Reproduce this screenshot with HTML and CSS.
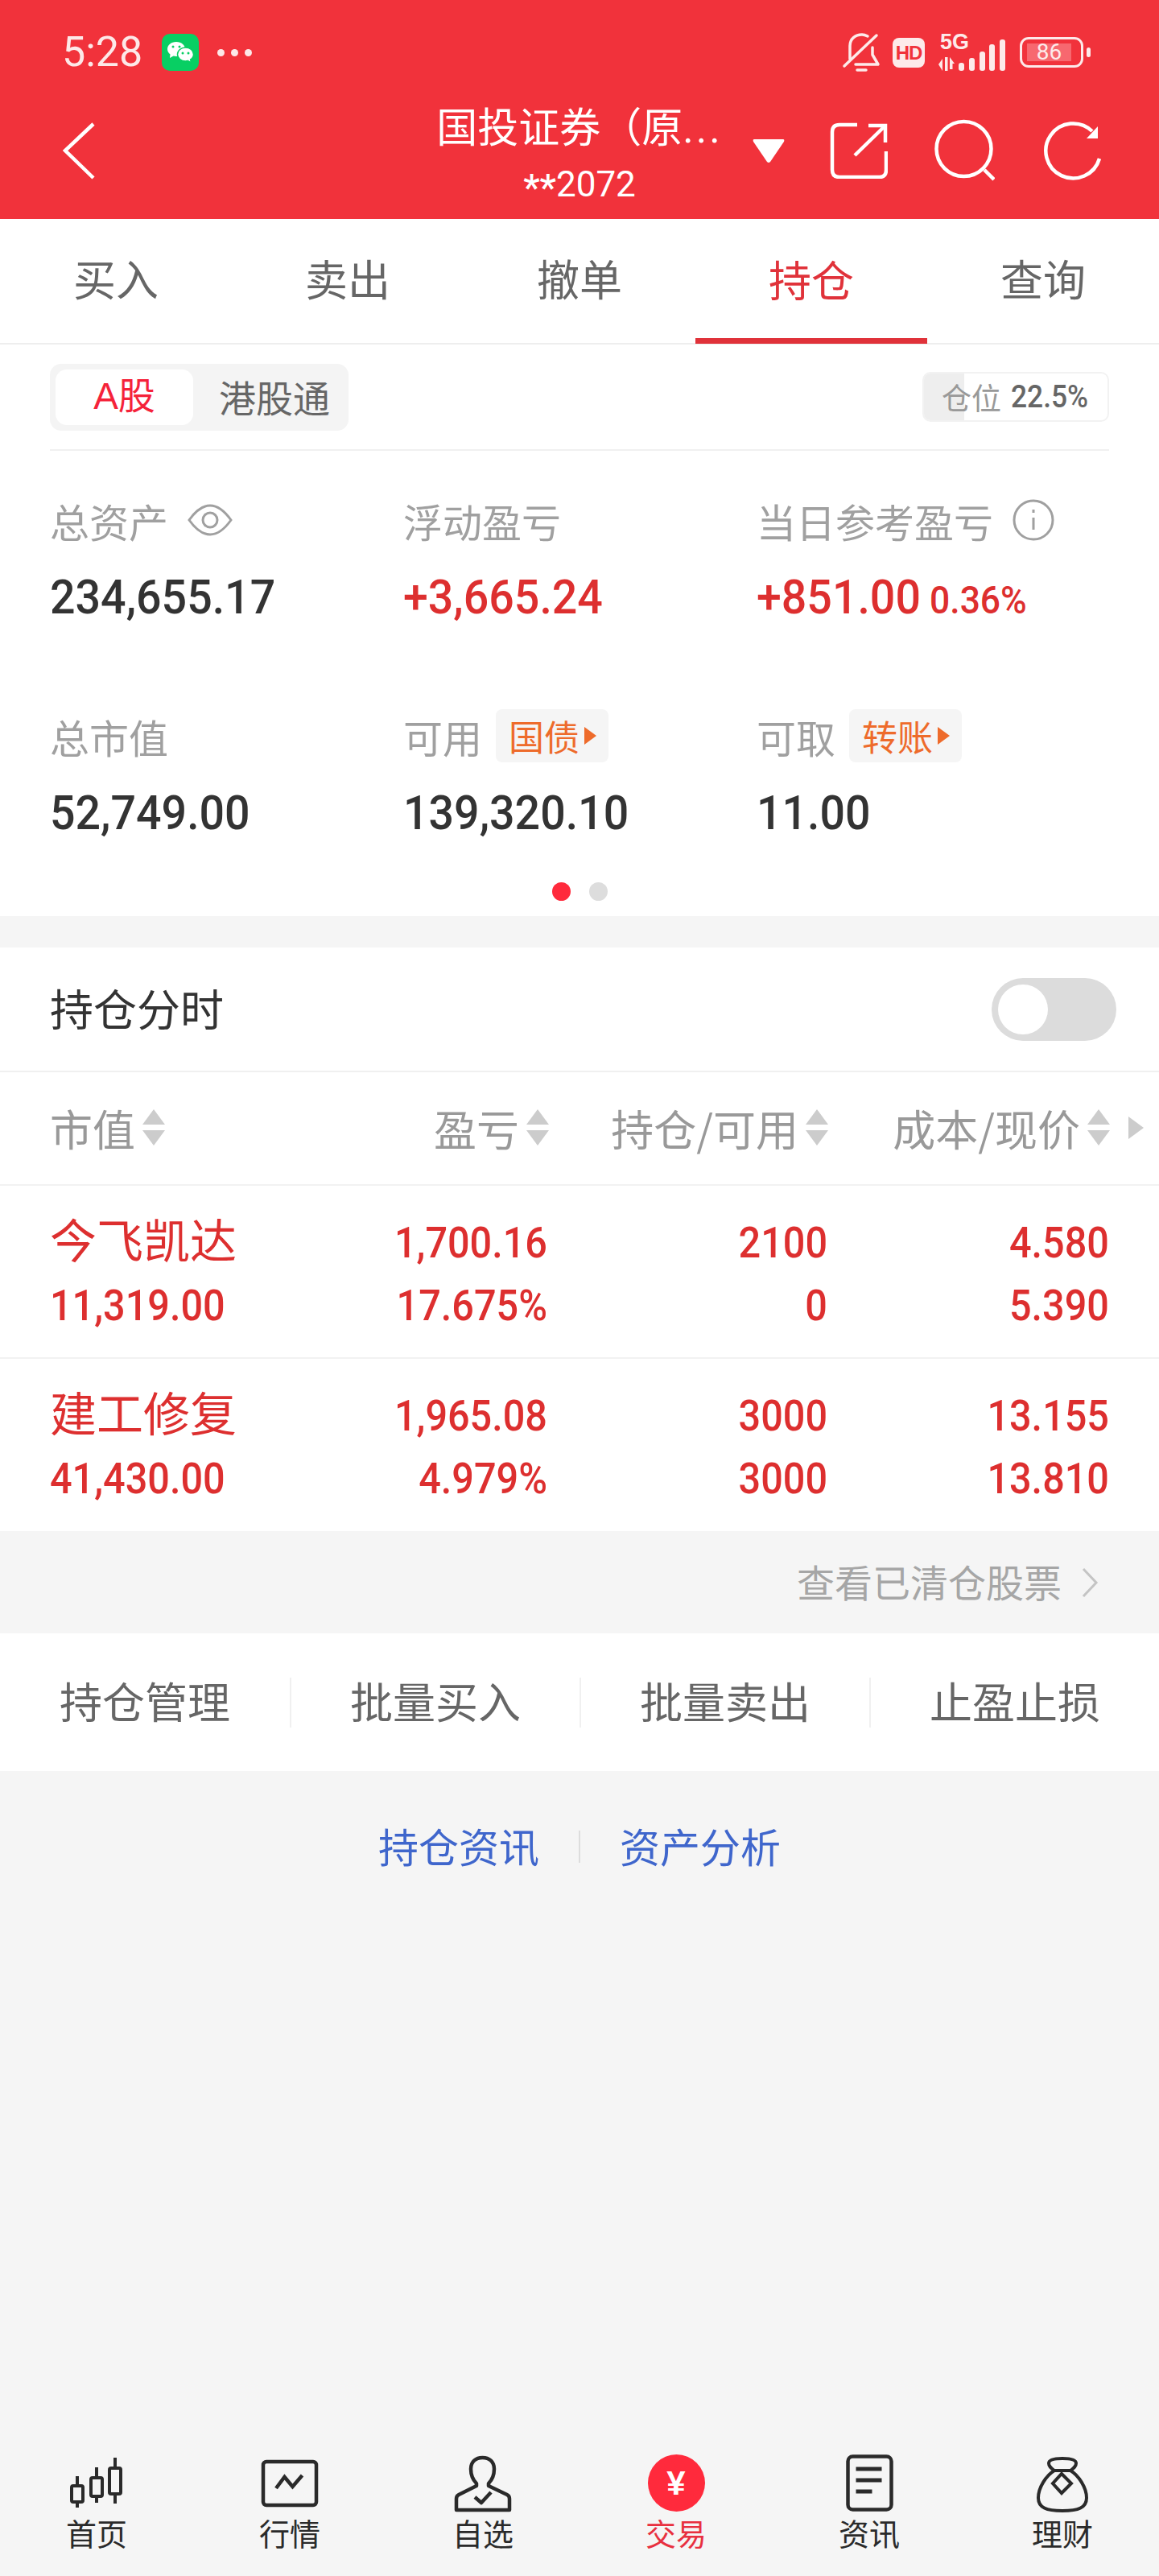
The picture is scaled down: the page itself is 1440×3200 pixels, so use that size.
FILE: index.html
```html
<!DOCTYPE html>
<html lang="zh-CN">
<head>
    <meta charset="UTF-8">
    <meta name="viewport" content="width=device-width, initial-scale=1.0">
    <title>持仓</title>
    <link rel="stylesheet" href="styles.css">
</head>
<body>
    <header class="top">
        <div class="statusbar">
            <div class="status-left">
                <span class="clock">5:28</span>
                <svg class="wechat" width="46" height="46" viewBox="0 0 46 46">
                    <rect width="46" height="46" rx="10" fill="#08cf63"/>
                    <path d="M18 10c-6.500 0-11 4-11 9 0 3 1.500 5 3.500 6.500L10 30l4.500-2.500c1 .3 2.300.5 3.500.5 6.500 0 11-4 11-9s-4.500-9-11-9z" fill="#fff"/>
                    <path d="M29.500 17c-5.500 0-10 3.800-10 8.500s4.500 8.500 10 8.500c1 0 2-.2 3-.4l4 2.400-.8-4c2.300-1.500 3.800-3.800 3.800-6.500 0-4.700-4.500-8.500-10-8.500z" fill="#fff" stroke="#08cf63" stroke-width="1.500"/>
                    <circle cx="14" cy="16" r="1.500" fill="#08cf63"/><circle cx="22" cy="16" r="1.500" fill="#08cf63"/>
                    <circle cx="26" cy="24" r="1.500" fill="#08cf63"/><circle cx="33" cy="24" r="1.500" fill="#08cf63"/>
                </svg>
                <span class="more"><i></i><i></i><i></i></span>
            </div>
            <div class="status-right">
                <svg width="50" height="52" viewBox="0 0 50 52" fill="none" stroke="#fdeaea" stroke-width="3.500" stroke-linecap="round" stroke-linejoin="round">
                    <path d="M44 5 4 43"/>
                    <path d="M11 34V18C11 9 18 4 26 4c3 0 5 1 7 2"/>
                    <path d="M39 20v9l7 12H18"/>
                    <path d="M20 48h11"/>
                </svg>
                <span class="hd">HD</span>
                <div class="net">
                    <span class="net-type">5G</span>
                    <svg width="86" height="40" viewBox="0 0 86 40" fill="#fdeaea">
                        <path d="M1 31l5-7v15zM9 22h3.500v17H9zM15 22l6 8h-2.500v7H15z"/>
                        <rect x="26" y="29" width="7" height="10" rx="3"/>
                        <rect x="39" y="23" width="7" height="16" rx="3"/>
                        <rect x="52" y="15" width="7" height="24" rx="3"/>
                        <rect x="64" y="6" width="7" height="33" rx="3"/>
                        <rect x="77" y="0" width="7" height="39" rx="3"/>
                    </svg>
                </div>
                <div class="battery"><span class="battery-fill">86</span></div>
                <span class="battery-nub"></span>
            </div>
        </div>
        <div class="navbar">
            <svg class="back" width="42" height="74" viewBox="0 0 42 74" fill="none" stroke="#fff" stroke-width="4.500">
                <path d="M38 4 3 37l35 34"/>
            </svg>
            <div class="account">
                <div class="account-name">国投证券（原<span class="dots">...</span></div>
                <div class="account-no"><span class="stars">**</span>2072</div>
            </div>
            <div class="nav-actions">
                <svg class="caret" width="40" height="31" viewBox="0 0 40 31"><path d="M2 1h36q2 0 1 3L22 29q-2 2-4 0L1 4Q0 1 2 1z" fill="#fff"/></svg>
                <svg class="act-export" width="72" height="70" viewBox="0 0 72 70" fill="none" stroke="#fff" stroke-width="4.500">
                    <path d="M34 3H12C6 3 3 6 3 12v47c0 6 3 9 9 9h50c5 0 8-3 8-9V36"/>
                    <path d="M48 4h21v21M31 41 69 4"/>
                </svg>
                <svg class="act-search" width="76" height="78" viewBox="0 0 76 78" fill="none" stroke="#fff" stroke-width="4.500">
                    <circle cx="37.500" cy="37" r="34"/>
                    <path d="m63 63 12 12"/>
                </svg>
                <svg class="act-refresh" width="76" height="78" viewBox="0 0 76 78" fill="none" stroke="#fff" stroke-width="4.500">
                    <path d="M72 49A34 34 0 1 1 63 15"/>
                    <path d="M70 9v15H56z" fill="#fff" stroke="none"/>
                </svg>
            </div>
        </div>
    </header>

    <nav class="tabs">
        <a>买入</a>
        <a>卖出</a>
        <a>撤单</a>
        <a class="active">持仓</a>
        <a>查询</a>
    </nav>

    <section class="assets">
        <div class="market-bar">
            <div class="segment">
                <span class="seg-item on">A股</span>
                <span class="seg-item">港股通</span>
            </div>
            <div class="position">
                <span class="position-fill"></span>
                <span class="position-label">仓位</span>
                <span class="position-value">22.5%</span>
            </div>
        </div>
        <div class="stats">
            <div class="stat">
                <div class="stat-label">总资产
                    <svg width="56" height="40" viewBox="0 0 56 40" fill="none" stroke="#a0a0a0" stroke-width="3">
                        <path d="M2 20C12 6 20 2 28 2s16 4 26 18c-10 14-18 18-26 18S12 34 2 20z"/>
                        <circle cx="28" cy="20" r="9"/>
                    </svg>
                </div>
                <div class="stat-value">234,655.17</div>
            </div>
            <div class="stat">
                <div class="stat-label">浮动盈亏</div>
                <div class="stat-value up">+3,665.24</div>
            </div>
            <div class="stat">
                <div class="stat-label">当日参考盈亏
                    <svg width="52" height="52" viewBox="0 0 52 52" fill="none" stroke="#a0a0a0" stroke-width="3">
                        <circle cx="26" cy="26" r="24"/>
                        <path d="M26 23v15M26 13v4"/>
                    </svg>
                </div>
                <div class="stat-value up">+851.00<span class="stat-rate">0.36%</span></div>
            </div>
            <div class="stat">
                <div class="stat-label">总市值</div>
                <div class="stat-value">52,749.00</div>
            </div>
            <div class="stat">
                <div class="stat-label">可用<span class="chip">国债</span></div>
                <div class="stat-value">139,320.10</div>
            </div>
            <div class="stat">
                <div class="stat-label">可取<span class="chip">转账</span></div>
                <div class="stat-value">11.00</div>
            </div>
        </div>
        <div class="pager"><i class="on"></i><i></i></div>
    </section>

    <section class="holdings">
        <div class="switch-row">
            <span class="switch-label">持仓分时</span>
            <span class="switch"><i></i></span>
        </div>
        <div class="table-head">
            <span class="th left">市值<i class="sort"></i></span>
            <span class="th">盈亏<i class="sort"></i></span>
            <span class="th">持仓/可用<i class="sort"></i></span>
            <span class="th">成本/现价<i class="sort"></i></span>
            <i class="more-cols"></i>
        </div>
        <div class="stock">
            <span class="stock-name">今飞凯达</span>
            <span>1,700.16</span>
            <span>2100</span>
            <span>4.580</span>
            <span class="stock-cap">11,319.00</span>
            <span>17.675%</span>
            <span>0</span>
            <span>5.390</span>
        </div>
        <div class="stock">
            <span class="stock-name">建工修复</span>
            <span>1,965.08</span>
            <span>3000</span>
            <span>13.155</span>
            <span class="stock-cap">41,430.00</span>
            <span>4.979%</span>
            <span>3000</span>
            <span>13.810</span>
        </div>
    </section>

    <div class="cleared">
        查看已清仓股票
        <svg width="22" height="38" viewBox="0 0 22 38" fill="none" stroke="#c4c4c4" stroke-width="3"><path d="M3 2l16 17L3 36"/></svg>
    </div>

    <div class="actions">
        <a>持仓管理</a>
        <a>批量买入</a>
        <a>批量卖出</a>
        <a>止盈止损</a>
    </div>

    <div class="links">
        <a>持仓资讯</a>
        <i></i>
        <a>资产分析</a>
    </div>

    <nav class="bottom-nav">
        <a class="nav-item">
            <svg width="80" height="80" viewBox="0 0 80 80" fill="none" stroke="#2a2a2a" stroke-width="4">
                <rect x="9" y="43" width="14" height="20" rx="2"/><path d="M16 31v12M16 63v7"/>
                <rect x="33" y="33" width="14" height="23" rx="2"/><path d="M40 20v13M40 56v8"/>
                <rect x="56" y="21" width="14" height="32" rx="2"/><path d="M63 8v13M63 53v12"/>
            </svg>
            首页
        </a>
        <a class="nav-item">
            <svg width="80" height="80" viewBox="0 0 80 80" fill="none" stroke="#2a2a2a" stroke-width="4.500">
                <rect x="7" y="13" width="66" height="54" rx="4"/>
                <path d="M23 46l10.500-14 10 12 12-14"/>
            </svg>
            行情
        </a>
        <a class="nav-item">
            <svg width="80" height="80" viewBox="0 0 80 80" fill="none" stroke="#2a2a2a" stroke-width="4.500" stroke-linejoin="round">
                <path d="M32 43v-3c-5-5-7-10-7-18 0-9 6-14 14.500-14S54 13 54 22c0 8-2 13-7 18v3l23 11c2 1 3 3 3 5v14H7V59c0-2 1-4 3-5z"/>
                <path d="M30 57l8 7 12-13"/>
            </svg>
            自选
        </a>
        <a class="nav-item on">
            <span class="yuan">¥</span>
            交易
        </a>
        <a class="nav-item">
            <svg width="80" height="80" viewBox="0 0 80 80" fill="none" stroke="#2a2a2a" stroke-width="4.500">
                <rect x="13.500" y="6.500" width="54" height="66" rx="6"/>
                <path d="M23.500 22h32M23.500 36h32M23.500 50h20" stroke-width="5"/>
            </svg>
            资讯
        </a>
        <a class="nav-item">
            <svg width="80" height="80" viewBox="0 0 80 80" fill="none" stroke="#2a2a2a" stroke-width="4">
                <path d="M30 24c-4-3-7-5-7-9 0-4 5-6 17-6s17 2 17 6c0 4-3 6-7 9"/>
                <path d="M30 24h20c10 6 20 21 20 34 0 12-10 16-30 16S10 70 10 58c0-13 10-28 20-34z"/>
                <path d="M39 28l12 12-12 12-11-12z"/>
            </svg>
            理财
        </a>
    </nav>
</body>
</html>
```

FILE: styles.css
```css
* {
    box-sizing: border-box;
}
html, body {
    margin: 0;
    padding: 0;
}
body {
    width: 1440px;
    height: 3200px;
    display: flex;
    flex-direction: column;
    background-color: #f5f5f5;
    color: #333;
    font-family: "Noto Sans CJK SC", "Noto Sans", sans-serif;
    overflow: hidden;
}
i {
    font-style: normal;
}
svg {
    display: block;
    flex: none;
}

/* red header */
.top {
    height: 272px;
    background-color: #f1323b;
    color: #fff;
}
.statusbar {
    height: 102px;
    padding: 28px 85px 0 77px;
    display: flex;
    align-items: center;
    justify-content: space-between;
}
.status-left,
.status-right {
    display: flex;
    align-items: center;
}
.clock {
    width: 124px;
    font-family: Roboto, sans-serif;
    font-size: 52px;
    line-height: 60px;
    color: #fde8e8;
}
.more {
    margin-left: 23px;
    display: flex;
    gap: 8px;
}
.more i {
    width: 9px;
    height: 9px;
    border-radius: 50%;
    background-color: #fde8e8;
}
.hd {
    width: 40px;
    height: 37px;
    margin-left: 14px;
    border-radius: 8px;
    background-color: #fdeaea;
    color: #f1323b;
    font-family: "Liberation Sans", sans-serif;
    font-size: 24px;
    font-weight: 700;
    letter-spacing: -1px;
    line-height: 37px;
    text-align: center;
}
.net {
    margin-left: 16px;
    width: 88px;
    display: flex;
    flex-direction: column;
}
.net-type {
    padding-left: 3px;
    font-family: "Liberation Sans", sans-serif;
    font-size: 27px;
    font-weight: 700;
    line-height: 22px;
    color: #fdeaea;
}
.net svg {
    margin-top: -14px;
}
.battery {
    width: 79px;
    height: 38px;
    margin-left: 14px;
    padding: 5px 6px;
    border: 3px solid #fdeaea;
    border-radius: 11px;
}
.battery-fill {
    display: block;
    width: 55px;
    height: 22px;
    background-color: #f7686f;
    color: #fdeaea;
    font-family: Roboto, sans-serif;
    font-size: 28px;
    line-height: 22px;
    text-align: center;
}
.battery-nub {
    width: 5px;
    height: 12px;
    margin-left: 4px;
    border-radius: 3px;
    background-color: #fdeaea;
}
.navbar {
    height: 170px;
    display: grid;
    grid-template-columns: 1fr 420px 1fr;
    align-items: center;
}
.back {
    margin-left: 78px;
}
.account {
    text-align: center;
    white-space: nowrap;
}
.account-name {
    font-size: 51px;
    line-height: 64px;
    margin-bottom: 14px;
}
.dots {
    font-family: Roboto, sans-serif;
    letter-spacing: 3px;
}
.account-no {
    font-family: Roboto, sans-serif;
    font-size: 44px;
    line-height: 46px;
}
.stars {
    display: inline-block;
    padding-top: 8px;
    vertical-align: bottom;
    font-size: 46px;
    font-weight: 500;
    line-height: 38px;
}
.nav-actions {
    padding-left: 5px;
    display: flex;
    align-items: center;
}
.act-export {
    margin-left: 56px;
}
.act-search {
    margin-left: 57px;
}
.act-refresh {
    margin-left: 58px;
}

/* tabs */
.tabs {
    height: 156px;
    display: grid;
    grid-template-columns: repeat(5, 1fr);
    background-color: #fff;
    border-bottom: 2px solid #eeeeee;
}
.tabs a {
    padding-bottom: 8px;
    display: flex;
    align-items: center;
    justify-content: center;
    font-size: 53px;
    color: #666;
}
.tabs a.active {
    padding-bottom: 1px;
    color: #e0323a;
    border-bottom: 7px solid #e0323a;
    margin-bottom: -1px;
}

/* assets panel */
.assets {
    height: 710px;
    background-color: #fff;
}
.market-bar {
    height: 132px;
    margin: 0 62px;
    display: flex;
    align-items: center;
    justify-content: space-between;
    border-bottom: 2px solid #f0f0f0;
}
.segment {
    display: flex;
    height: 83px;
    padding: 7px;
    background-color: #f4f4f4;
    border-radius: 14px;
    font-size: 46px;
    line-height: 67px;
    color: #666;
}
.seg-item {
    width: 171px;
    padding-left: 20px;
    border-radius: 14px;
    text-align: center;
}
.seg-item + .seg-item {
    width: 186px;
    padding-left: 16px;
}
.seg-item.on {
    padding-left: 0;
    background-color: #fff;
    color: #f5233a;
    font-family: "Liberation Sans", "Noto Sans CJK SC", sans-serif;
}
.position {
    position: relative;
    width: 232px;
    height: 62px;
    padding-left: 22px;
    display: flex;
    align-items: center;
    gap: 12px;
    border: 2px solid #f2f2f2;
    border-radius: 10px;
    overflow: hidden;
    white-space: nowrap;
    font-size: 37px;
}
.position-fill {
    position: absolute;
    left: 0;
    top: 0;
    bottom: 0;
    width: 50px;
    background-color: #eeeeee;
}
.position-label {
    position: relative;
    color: #999;
}
.position-value {
    font-family: Roboto, sans-serif;
    font-size: 38px;
    font-weight: 500;
    color: #666;
    transform: scaleX(.93);
    transform-origin: left center;
}
.stats {
    padding: 53px 0 0 62px;
    display: grid;
    grid-template-columns: 439px 439px 440px;
    grid-auto-rows: 160px;
    row-gap: 108px;
}
.stat-label {
    height: 66px;
    display: flex;
    align-items: center;
    gap: 24px;
    font-size: 49px;
    color: #a0a0a0;
    white-space: nowrap;
}
/* the app's digits are narrower than Roboto's */
.stat-value {
    margin-top: 28px;
    font-family: Roboto, sans-serif;
    font-size: 60px;
    font-weight: 500;
    line-height: 70px;
    color: #333;
    white-space: nowrap;
    transform: scaleX(.925);
    transform-origin: left center;
}
.stat-value.up {
    color: #dd2f2f;
}
.stat-rate {
    margin-left: 12px;
    font-size: 48px;
}
.chip {
    width: 140px;
    height: 66px;
    margin-left: -7px;
    padding-left: 16px;
    display: flex;
    align-items: center;
    gap: 6px;
    background-color: #f5f5f5;
    border-radius: 8px;
    font-size: 44px;
    color: #ee6b2b;
}
.chip::after {
    content: "";
    border-left: 15px solid #ee6b2b;
    border-top: 11px solid transparent;
    border-bottom: 11px solid transparent;
}
.pager {
    margin-top: 55px;
    display: flex;
    justify-content: center;
    gap: 23px;
}
.pager i {
    width: 23px;
    height: 23px;
    border-radius: 50%;
    background-color: #dddddd;
}
.pager i.on {
    background-color: #ff2a3c;
}

/* holdings table */
.holdings {
    margin-top: 39px;
    background-color: #fff;
}
.switch-row {
    height: 155px;
    padding: 0 53px 0 62px;
    display: flex;
    align-items: center;
    justify-content: space-between;
    border-bottom: 2px solid #f0f0f0;
    font-size: 54px;
}
.switch-label {
    padding-bottom: 4px;
}
.switch {
    width: 155px;
    height: 78px;
    padding: 8px;
    border-radius: 39px;
    background-color: #dcdcdc;
}
.switch i {
    display: block;
    width: 62px;
    height: 62px;
    border-radius: 50%;
    background-color: #fff;
}
.table-head,
.stock {
    display: grid;
    grid-template-columns: 238px 380px 348px 350px;
    padding-left: 62px;
}
.table-head {
    grid-template-columns: 238px 382px 347px 350px 1fr;
    height: 141px;
    padding-bottom: 2px;
    align-items: center;
    border-bottom: 2px solid #f2f2f2;
    font-size: 53px;
    color: #999;
}
.th {
    display: flex;
    align-items: center;
    justify-content: flex-end;
    gap: 9px;
    white-space: nowrap;
}
.th.left {
    justify-content: flex-start;
}
.sort {
    display: flex;
    flex-direction: column;
    gap: 7px;
}
.sort::before,
.sort::after {
    content: "";
    border-left: 14px solid transparent;
    border-right: 14px solid transparent;
}
.sort::before {
    border-bottom: 19px solid #cccccc;
}
.sort::after {
    border-top: 19px solid #cccccc;
}
.more-cols {
    width: 0;
    margin-left: 23px;
    border-left: 19px solid #cccccc;
    border-top: 14px solid transparent;
    border-bottom: 14px solid transparent;
}
.stock {
    height: 215px;
    padding-top: 31px;
    grid-auto-rows: 78px;
    align-items: center;
    border-bottom: 2px solid #f2f2f2;
    font-family: Roboto, sans-serif;
    font-size: 54px;
    font-weight: 500;
    color: #dd2f2f;
    text-align: right;
}
.stock:last-child {
    height: 214px;
    border-bottom: 0;
}
.stock span {
    transform: scaleX(.9);
    transform-origin: right center;
    white-space: nowrap;
}
.stock .stock-cap {
    text-align: left;
    transform-origin: left center;
}
.stock .stock-name {
    padding-bottom: 10px;
    font-family: "Noto Sans CJK SC", sans-serif;
    font-size: 58px;
    font-weight: 400;
    text-align: left;
    transform: none;
}

/* below the table */
.cleared {
    height: 127px;
    padding: 0 75px 4px 0;
    display: flex;
    align-items: center;
    justify-content: flex-end;
    gap: 24px;
    font-size: 47px;
    color: #a6a6a6;
}
.cleared svg {
    margin-top: 4px;
}
.actions {
    height: 171px;
    display: grid;
    grid-template-columns: repeat(4, 1fr);
    align-items: center;
    background-color: #fff;
    font-size: 53px;
    color: #666;
}
.actions a {
    height: 62px;
    padding-bottom: 6px;
    display: flex;
    align-items: center;
    justify-content: center;
    border-left: 2px solid #f0f0f0;
}
.actions a:first-child {
    border-left: 0;
}
.links {
    margin-top: 62px;
    height: 60px;
    display: flex;
    align-items: center;
    justify-content: center;
    font-size: 50px;
    color: #3f66cc;
}
.links i {
    width: 2px;
    height: 40px;
    margin: 4px 49px 0;
    background-color: #dddddd;
}

/* bottom nav */
.bottom-nav {
    margin-top: auto;
    height: 155px;
    display: grid;
    grid-template-columns: repeat(6, 1fr);
}
.nav-item {
    display: flex;
    flex-direction: column;
    align-items: center;
    font-size: 38px;
    line-height: 42px;
    color: #2a2a2a;
}
.nav-item.on {
    color: #e8303f;
}
.yuan {
    width: 71px;
    height: 71px;
    margin: 4px 0 5px;
    border-radius: 50%;
    background-color: #ff2a3c;
    color: #fff;
    font-family: "Liberation Sans", sans-serif;
    font-size: 42px;
    font-weight: 700;
    line-height: 71px;
    text-align: center;
}
```
